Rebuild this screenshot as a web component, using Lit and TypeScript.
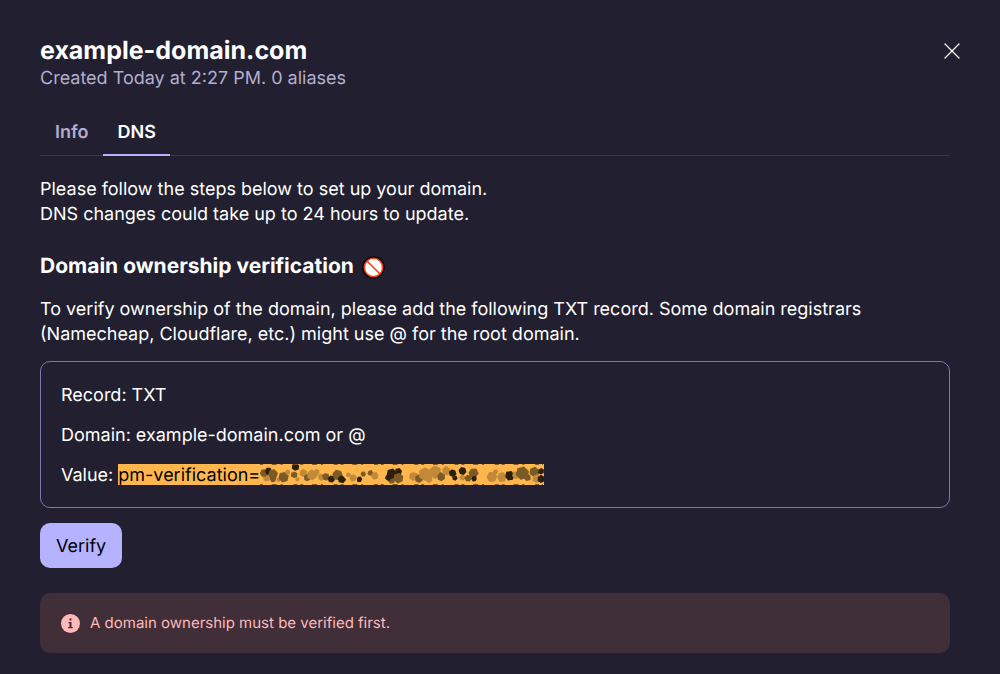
import { LitElement, html, css, svg } from "lit";
import { customElement, state } from "lit/decorators.js";

/** Dark spots of the scrambled token: x, y, radius, shade. */
const SPOTS: Array<[number, number, number, number]> = [
  [7, 14, 4, 1], [4, 9, 3, 2], [9, 7, 4, 3], [13, 10, 4, 2], [13, 15, 3, 2], [19, 16, 2, 1], [24, 13, 4, 2], [28, 8, 3, 1],
  [36, 3, 3, 3], [35, 11, 3, 2], [38, 15, 2, 1], [44, 9, 3, 1], [48, 14, 4, 2], [53, 11, 4, 1], [58, 8, 3, 1], [62, 13, 3, 1],
  [67, 13, 3, 2], [73, 15, 4, 3], [79, 11, 4, 2], [83, 15, 4, 3], [90, 11, 2, 1], [95, 14, 3, 1], [101, 15, 3, 3], [105, 10, 2, 2],
  [112, 9, 3, 2], [117, 12, 3, 1], [134, 16, 3, 2], [130, 14, 3, 3], [134, 10, 4, 3], [141, 8, 4, 3], [141, 14, 4, 2],
  [156, 12, 4, 1], [162, 15, 4, 2], [168, 10, 5, 1], [172, 15, 4, 1], [178, 8, 5, 1], [184, 13, 4, 2], [190, 7, 4, 1],
  [196, 9, 3, 3], [198, 14, 3, 3], [206, 7, 3, 3], [206, 14, 3, 1], [212, 14, 3, 2], [217, 9, 4, 2], [218, 15, 3, 3],
  [236, 13, 4, 1], [240, 8, 3, 1], [246, 13, 4, 1], [254, 12, 4, 3], [261, 11, 4, 1], [267, 9, 5, 2], [272, 13, 4, 2],
  [279, 8, 4, 2], [282, 15, 4, 1], [286, 7, 3, 3], [286, 15, 3, 3],
];
const SHADES = ["#ffb74d", "#c08a3a", "#7b5a26", "#2c200d"];

@customElement("app-root")
export class AppRoot extends LitElement {
  static styles = css`
    :host {
      display: block;
      min-height: 100vh;
      box-sizing: border-box;
      padding: 37px 50px 21px 40px;
      background: #211f30;
      color: #fff;
      font: 18px/25px Inter, sans-serif;
      text-rendering: geometricPrecision;
    }
    * { box-sizing: border-box; }
    h1, h2, p, dl, dd { margin: 0; }
    button { font: inherit; text-rendering: inherit; border: 0; cursor: pointer; }
    .header { display: flex; justify-content: space-between; margin-right: -10px; }
    .title { font-size: 25px; line-height: 29px; font-weight: 700; }
    .meta { line-height: 25px; color: #b3aecd; }
    .close { width: 16px; height: 16px; margin-top: 6px; padding: 0; background: none; color: #fff; }
    .close svg { display: block; }
    .tabs { display: flex; margin-top: 18px; border-bottom: 1px solid #3b384d; }
    .tab { padding: 11px 14px 9px 15px; margin-bottom: -1px; border-bottom: 2px solid transparent; background: none; color: #b3aecd; font-weight: 600; }
    .tab.active { color: #fff; border-color: #b5b3ff; }
    .intro { margin-top: 21px; }
    .section { display: flex; align-items: center; gap: 8px; margin-top: 26px; font-size: 21px; line-height: 28px; font-weight: 700; }
    .help { max-width: 860px; margin-top: 16px; }
    .records { margin-top: 14px; padding: 21px 20px 19px; border: 1px solid #7f78ad; border-radius: 10px; display: grid; gap: 15px; }
    .record { display: flex; gap: 5px; }
    .value { display: flex; height: 21px; line-height: 23px; margin-top: 1px; background: #ffb74d; color: #000; }
    .verify { display: block; margin-top: 15px; padding: 11px 16px 9px; border-radius: 10px; background: #b5b3ff; color: #000; }
    .notice { display: flex; align-items: center; gap: 10px; margin-top: 25px; padding: 18px 21px; border-radius: 10px; background: #402e38; color: #ffb9b9; font-size: 15px; line-height: 24px; }
  `;

  @state() private tab = "DNS";

  private spot([x, y, r, shade]: [number, number, number, number], i: number) {
    const points = Array.from({ length: 6 }, (_, k) => {
      const a = (k / 6) * Math.PI * 2 + i;
      const d = r * (0.8 + 0.6 * Math.abs(Math.sin(i * 5 + k * 3)));
      return `${(x + Math.cos(a) * d).toFixed(1)},${(y + Math.sin(a) * d).toFixed(1)}`;
    }).join(" ");
    return svg`<polygon points=${points} fill=${SHADES[shade]}></polygon>`;
  }

  render() {
    return html`
      <header class="header">
        <div>
          <h1 class="title">example-domain.com</h1>
          <p class="meta">Created Today at 2:27 PM. 0 aliases</p>
        </div>
        <button class="close" aria-label="Close">
          <svg width="16" height="16" viewBox="0 0 16 16" fill="none" stroke="currentColor" stroke-width="1.3" stroke-linecap="round"><path d="M1 1l14 14M15 1L1 15" /></svg>
        </button>
      </header>
      <nav class="tabs" role="tablist">
        ${["Info", "DNS"].map((t) => html`<button role="tab" aria-selected=${this.tab === t} class="tab ${this.tab === t ? "active" : ""}" @click=${() => (this.tab = t)}>${t}</button>`)}
      </nav>
      <p class="intro">Please follow the steps below to set up your domain.<br />DNS changes could take up to 24 hours to update.</p>
      <h2 class="section">
        Domain ownership verification
        <svg width="23" height="23" viewBox="0 0 23 23"><circle cx="11.5" cy="11.5" r="11.2" fill="#080808" /><circle cx="11.5" cy="11.5" r="9.2" fill="#fff" stroke="#e8401c" stroke-width="1.6" /><path d="M5 5l13 13" stroke="#e8401c" stroke-width="1.6" /></svg>
      </h2>
      <p class="help">To verify ownership of the domain, please add the following TXT record. Some domain registrars (Namecheap, Cloudflare, etc.) might use @ for the root domain.</p>
      <dl class="records">
        <div class="record"><dt>Record:</dt><dd>TXT</dd></div>
        <div class="record"><dt>Domain:</dt><dd>example-domain.com or @</dd></div>
        <div class="record"><dt>Value:</dt><dd class="value">pm-verification=<svg width="284" height="21" viewBox="0 0 289 21" preserveAspectRatio="none">${SPOTS.map((s, i) => this.spot(s, i))}<path d="M0 .5h288M0 20.5h288" stroke="#7b5a26" stroke-dasharray="3 9 5 4 2 11 4 3" /></svg></dd></div>
      </dl>
      <button class="verify">Verify</button>
      <div class="notice" role="status">
        <svg width="19" height="19" viewBox="0 0 19 19"><circle cx="9.5" cy="9.5" r="9.5" fill="#ffb9b9" /><path d="M8.5 4.5h2v2h-2zM7.5 8h3v5h1.3v1.2H7.2V13h1.3V9.200h-1z" fill="#402e38" /></svg>
        A domain ownership must be verified first.
      </div>
    `;
  }
}
